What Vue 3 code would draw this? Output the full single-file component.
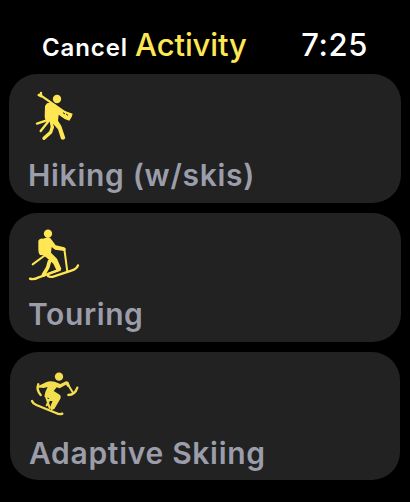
<template>
  <main class="watch">
    <header class="top">
      <button class="cancel">Cancel</button>
      <h1>Activity</h1>
      <time>7:25</time>
    </header>

    <ul class="list">
      <li v-for="item in activities" :key="item.id" class="card" :class="item.id">
        <svg v-if="item.id === 'hiking'" class="icon" viewBox="0 0 180 180">
          <circle class="fill" cx="99" cy="39" r="12.5" />
          <path class="fill" d="M69 52 Q80 47 93 55 L108 70 L146 83 L143 93 L136 104 L122 99 L104 86 L102 104 L112 120 L124 156 Q119 165 111 159 L102 130 L82 108 L65 103 L62 94 L63 60 Z" />
          <path class="line" stroke-width="7" d="M47 26 L137 89" />
          <path class="line" stroke-width="7" d="M44 27 L51 31 M51 21 L51 27" />
          <path class="line" stroke-width="7" d="M75 101 L39 113 M74 105 L50 135" />
          <path class="line" stroke-width="10" d="M85 124 L80 139 L60 157" />
          <path class="line" stroke-width="9" d="M81 104 L85 124" />
          <path class="cut" d="M117 80 L123 84 M126 84 L132 88" />
        </svg>

        <svg v-else-if="item.id === 'touring'" class="icon" viewBox="0 0 180 180">
          <circle class="fill" cx="72" cy="29" r="12.5" />
          <path class="fill" d="M43 50 Q48 42 57 44 L72 39 Q80 41 85 50 L95 64 L121 70 L126 75 L121 81 L93 77 L83 69 L81 86 L99 104 L112 134 Q108 145 97 138 L88 119 L68 101 L58 94 L48 93 Q43 88 43 77 Z" />
          <path class="line" stroke-width="6" d="M121 75 L130 143 M64 93 L26 121" />
          <path class="line" stroke-width="11" d="M76 113 L71 131 L58 153" />
          <path class="line" stroke-width="7" d="M18 164 Q28 168 44 160 L107 138" />
          <path class="line" stroke-width="7" d="M72 156 Q79 161 90 157 L142 140 Q158 135 162 124" />
          <path class="line" stroke-width="6" d="M71 150 L103 138" />
        </svg>

        <svg v-else class="icon" viewBox="0 0 180 180">
          <circle class="fill" cx="105" cy="38" r="12.5" />
          <path class="fill" d="M66 55 Q78 49 92 53 L109 60 L126 52 L133 53 L138 66 L131 69 L126 62 L107 73 L98 70 L89 81 L105 91 Q113 97 109 104 L91 135 L82 139 L78 130 L87 108 L72 101 L61 98 L64 84 L71 69 L59 72 L46 69 L49 63 Z" />
          <path class="line" stroke-width="7" d="M43 61 Q36 77 50 93 M46 68 L59 66" />
          <path class="line" stroke-width="6" d="M133 64 L147 86" />
          <path class="line" stroke-width="7" d="M133 93 Q153 93 160 71" />
          <path class="line" stroke-width="6" d="M66 97 L77 132 M78 104 L68 124 M71 107 L88 108" />
          <path class="line" stroke-width="7" d="M24 111 Q27 119 37 123 L96 147 Q107 153 115 149" />
        </svg>
        <span class="label">{{ item.name }}</span>
      </li>
    </ul>
  </main>
</template>

<script setup>
const activities = [
  { id: 'hiking', name: 'Hiking (w/skis)' },
  { id: 'touring', name: 'Touring' },
  { id: 'adaptive', name: 'Adaptive Skiing' },
];
</script>

<style>
body {
  margin: 0;
  background: #000;
}
</style>

<style scoped>
.watch {
  width: 410px;
  height: 502px;
  box-sizing: border-box;
  overflow: hidden;
  background: #000;
  font-family: Inter, Roboto, sans-serif;
}
.top {
  display: flex;
  align-items: baseline;
  height: 74px;
  box-sizing: border-box;
  padding: 25px 42px 0 42px;
  white-space: nowrap;
}
.cancel {
  width: 93px;
  padding: 0;
  border: none;
  background: none;
  color: #fff;
  font: 600 24px/40px Inter, sans-serif;
  letter-spacing: 0.9px;
  text-align: left;
}
h1 {
  margin: 0;
  color: #fee753;
  font-size: 31px;
  font-weight: 500;
  line-height: 40px;
  letter-spacing: -0.1px;
}
time {
  margin-left: auto;
  color: #fff;
  font-size: 31px;
  font-weight: 500;
  line-height: 40px;
  letter-spacing: 0.6px;
}
.list {
  display: flex;
  flex-direction: column;
  gap: 10px;
  margin: 0;
  padding: 0 9px;
  list-style: none;
}
.card {
  display: flex;
  flex-direction: column;
  height: 129px;
  box-sizing: border-box;
  padding: 12px 15px 0;
  border-radius: 28px;
  background: #222;
}
.touring {
  padding-top: 11px;
}
.adaptive {
  height: 128px;
  margin: 0 1px;
  padding: 12px 14px 0;
}
.icon {
  flex: none;
  width: 60px;
  height: 60px;
}
.fill {
  fill: #fee753;
}
.line {
  fill: none;
  stroke: #fee753;
  stroke-linecap: round;
  stroke-linejoin: round;
}
.cut {
  fill: none;
  stroke: #222;
  stroke-width: 3;
}
.adaptive .fill {
  fill: #f3de50;
}
.adaptive .line {
  stroke: #f3de50;
}
.label {
  padding-left: 4px;
  margin-top: 9px;
  color: #9b9eaa;
  font-size: 30px;
  font-weight: 600;
  line-height: 40px;
  letter-spacing: 0.7px;
  white-space: nowrap;
}
.touring .label {
  margin-top: 10px;
  letter-spacing: 0.6px;
}
.adaptive .label {
  padding-left: 5px;
}
</style>
